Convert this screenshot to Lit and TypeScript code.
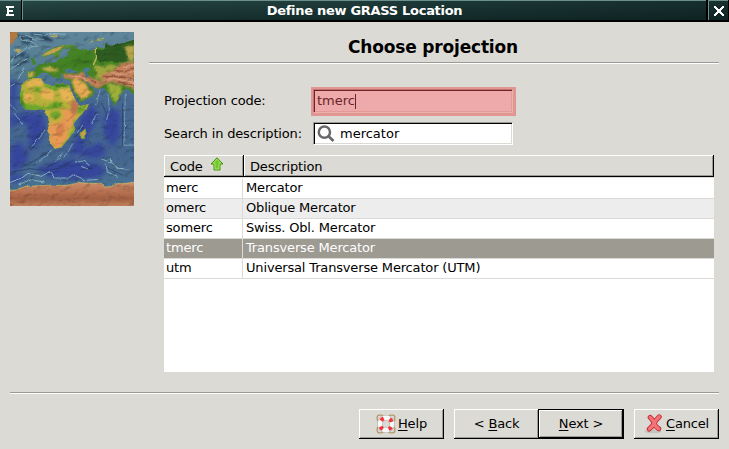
import { LitElement, html, svg, css } from "lit";
import { customElement, property } from "lit/decorators.js";
import { classMap } from "lit/directives/class-map.js";

const land = {
  africa:
    "M36 160L50 143 72 140 95 139 98 150 108 157 118 158 130 164 138 152 150 153 175 158 184 176 198 206 210 222 237 215 229 234 206 256 190 276 196 291 185 308 172 325 155 345 135 352 124 338 118 318 112 295 119 272 108 250 106 238 98 232 70 233 46 232 30 210 30 182Z",
  eurasia:
    "M52 138L52 118 76 117 77 106 90 97 104 92 106 84 116 92 140 91 152 78 176 72 172 62 188 46 214 53 250 56 262 45 284 50 287 32 302 42 330 36 372 23V190L358 178 346 170 337 182 324 197 316 223 305 207 297 184 285 171 262 170 244 164 232 150 226 149 240 164 256 178 241 196 211 208 201 196 183 164 182 146 162 141 160 128 150 123 155 137 147 140 136 128 146 144 128 134 114 124 100 121 92 126 76 136 64 143Z",
  scandinavia: "M94 72L120 52 150 40 184 37 202 46 180 52 160 50 150 60 149 74 137 82 128 70 116 68 104 77Z",
  britain: "M62 97L64 86 60 76 70 74 76 88 79 96 68 99Z",
  madagascar: "M226 291L228 304 219 321 213 318 213 302Z",
  antarctica: "M-9 480L20 473 42 464 100 460 170 460 210 452 240 454 278 454 284 466 320 458 380 449V530H-9Z",
};

@customElement("relief-map")
class ReliefMap extends LitElement {
  static styles = css`
    :host { display: block; width: 124px; height: 174px; }
    svg { display: block; }
  `;
  render() {
    return html`<svg width="124" height="174" viewBox="0 0 372 522">
      <defs>
        <linearGradient id="sea" x1="0" y1="0" x2="0" y2="1">
          <stop offset="0" stop-color="#5b8399" /><stop offset=".2" stop-color="#507a90" />
          <stop offset=".4" stop-color="#41658f" /><stop offset=".7" stop-color="#40628d" />
          <stop offset="1" stop-color="#467590" />
        </linearGradient>
        <linearGradient id="ice" gradientUnits="userSpaceOnUse" x1="0" y1="450" x2="0" y2="522">
          <stop offset="0" stop-color="#cc8c65" /><stop offset=".45" stop-color="#b46b4a" /><stop offset=".7" stop-color="#9f5b3c" /><stop offset="1" stop-color="#c07c58" />
        </linearGradient>
        <filter id="relief" x="0" y="0" width="100%" height="100%" color-interpolation-filters="sRGB">
          <feTurbulence type="fractalNoise" baseFrequency=".035 .045" numOctaves="3" seed="21" result="n" />
          <feDiffuseLighting in="n" surfaceScale="4" diffuseConstant="1.25" lighting-color="#fff" result="l">
            <feDistantLight azimuth="235" elevation="55" />
          </feDiffuseLighting>
          <feComposite in="SourceGraphic" in2="l" operator="arithmetic" k1=".75" k2=".22" />
        </filter>
        <filter id="rough" filterUnits="userSpaceOnUse" x="-12" y="-12" width="396" height="546" color-interpolation-filters="sRGB">
          <feTurbulence type="fractalNoise" baseFrequency=".06" numOctaves="2" seed="3" />
          <feDisplacementMap in="SourceGraphic" scale="9" xChannelSelector="R" yChannelSelector="G" />
        </filter>
        <filter id="haze" filterUnits="userSpaceOnUse" x="-40" y="-40" width="460" height="610"><feGaussianBlur stdDeviation="8" /></filter>
        <filter id="soft" filterUnits="userSpaceOnUse" x="-20" y="-20" width="420" height="570"><feGaussianBlur stdDeviation="2.6" /></filter>
        <clipPath id="eu"><path d=${land.eurasia} /></clipPath>
        <clipPath id="af"><path d=${land.africa} /></clipPath>
      </defs>
      <g filter="url(#relief)">
        <rect width="372" height="522" fill="url(#sea)" />
        <g fill="#2f3e9c" filter="url(#haze)" opacity=".9">
          <path d="M0 140L24 150 15 230 0 245ZM0 250L45 243 98 244 108 290 90 330 58 360 52 280 25 270 0 290ZM0 350L30 325 58 375 28 415 0 420Z" />
          <path d="M212 252L250 215 266 255 244 294 222 340 209 366 174 370 203 310ZM299 226L330 240 330 310 307 349 282 310 280 260Z" />
          <path d="M75 411L130 392 180 381 210 389 270 396 291 416 265 438 186 444 114 435ZM205 356L274 330 289 365 263 380 220 376ZM0 424L55 433 18 455 0 453Z" />
        </g>
        <g filter="url(#soft)" fill="none" stroke="#223e5b" stroke-width="7" stroke-linejoin="round">
          <path d="M8 4L40 18 67 17 54 35 34 26M62 5L96 9 126 26 88 20M4 78L44 63 35 78M15 102L43 90 56 70" />
        </g>
        <g fill="none" stroke="#23396a" stroke-width="3" opacity=".75">
          <path d="M102 290L78 321 58 349M119 356L74 386 41 401M169 366L143 391 105 409M192 383L138 412M275 213L295 258M338 213V342M20 270L55 251M0 421L60 410 107 416 151 408M235 352L206 378M352 281L324 320M210 414L250 408M286 405L337 429" />
        </g>
        <g fill="none" stroke="#86afbd" stroke-width="3" stroke-linejoin="round" filter="url(#rough)">
          <path d="M70 6L102 10 124 4 168 7M27 13L38 28 62 27 83 42 51 46 30 63 12 73 3 94M5 112L34 88 53 80M30 13L51 10 75 21 102 22M36 54L11 57M15 155L0 163M45 109L29 132 22 140" />
          <path d="M0 217L18 235M12 242L37 278M107 291L86 322 64 344M126 353L110 370 76 396M158 362L139 386M188 335L171 365 143 386M294 186L298 231 286 280M346 185L342 340 374 339M270 176L257 219M243 276L257 251 265 247" stroke="#7099af" />
          <path d="M0 451L34 439 54 424 94 433 119 419 134 438 175 438 190 428 229 445 267 442M195 390L222 387 239 401M274 381L306 393 325 409 360 412M288 395L292 420 324 434M303 391L300 378M210 402L234 411M25 456L64 444 104 450M218 280L202 303" />
        </g>
        <g filter="url(#rough)">
          <path d="M-9 -6H24L18 23 8 36 -9 40Z" fill="#ae743e" />
          <path d="M13 55L24 50 36 55 26 61ZM118 9L146 7 143 15 126 16Z" fill="#b9a251" />
          <path d=${land.britain} fill="#407f30" />
          <path d="M237 34Q252 22 282 19" stroke="#a5aa58" stroke-width="4" fill="none" />
          <path d=${land.scandinavia} fill="#588c36" />
          <path d="M95 72L128 51 162 39 148 54 116 68Z" fill="#bea14a" />
          <path d=${land.eurasia} fill="#40801f" />
          <g clip-path="url(#eu)">
            <path d="M258 51L280 55 290 31 375 23 375 76 341 93 306 86 272 94 256 76Z" fill="#28581a" />
            <g filter="url(#soft)">
              <path d="M342 43L374 39V83L354 84 350 64Z" fill="#b8a447" />
              <path d="M255 100L281 105 303 96 326 104 370 82V115L290 139 256 142Z" fill="#9ba439" />
              <path d="M157 126L202 125 216 119 238 134 272 149 277 126 309 119 332 94 375 88V171L336 158 304 150 286 156 262 170 239 155 219 145 162 139Z" fill="#c27e55" />
              <path d="M184 147L201 140 229 157 235 172 246 178 236 193 214 201 202 190Z" fill="#e8aa4d" />
              <path d="M295 154L333 162 335 178 317 213 300 190Z" fill="#9dae35" />
              <path d="M53 119L75 119 69 135 53 137ZM93 109L116 104 149 114 135 119 110 118Z" fill="#c6ae4a" />
              <path d="M119 95L152 100 190 80 213 67 239 70 247 97 215 108 188 100 156 109 125 104Z" fill="#3b7a1d" />
            </g>
            <path d="M259 45L259 78 250 99" stroke="#c5b952" stroke-width="4" fill="none" />
            <path d="M281 143L310 139 372 151M300 125L344 127 375 117M339 106L375 97M176 131L211 134 235 145" stroke="#da997a" stroke-width="4" fill="none" />
            <path d="M277 133L316 134 372 140M314 115L346 119 374 108M327 150L375 160M235 137L260 155" stroke="#92503c" stroke-width="4" fill="none" />
          </g>
          <path d="M166 113Q179 108 184 113L207 119 186 123 166 122ZM218 113L235 104 241 113 233 119 239 132 229 136 222 121Z" fill="#447795" />
          <path d=${land.africa} fill="#b6ae37" />
          <g clip-path="url(#af)" filter="url(#soft)">
            <path d="M49 153L72 143 105 145 95 163 76 159 55 164ZM87 179L114 161 132 183 125 205 95 199ZM140 167L173 159 190 194 184 211 157 204 150 180ZM43 185L65 183 72 201 47 212Z" fill="#e7b150" />
            <path d="M27 179L43 175 36 201 43 214 75 220 108 225 134 209 155 211 155 229 111 234 71 235 40 234 27 207ZM102 140L109 155 138 164 139 151 176 154 179 168 150 170 131 177 102 164ZM77 165L97 167 91 178 73 181ZM193 230L226 218 230 225 207 248Z" fill="#64a522" />
            <path d="M27 195L43 210 45 230 31 226ZM127 152L176 154 172 164 140 166Z" fill="#357f1d" />
            <path d="M153 232L194 235 200 255 188 278 171 299 172 319 142 351 124 336 113 294 121 275 153 267Z" fill="#e8984f" />
            <path d="M108 234L154 228 163 258 142 275 120 269Z" fill="#c7ad3a" />
            <path d="M120 239L147 235 153 252 137 264 120 255Z" fill="#6da42a" />
            <path d="M182 208L199 206 208 223 193 253 181 239Z" fill="#be7149" />
            <path d="M192 262L196 291 179 317 159 344" stroke="#69a425" stroke-width="7" fill="none" />
            <path d="M145 279L163 268 164 299 145 317 137 300Z" fill="#d78048" />
          </g>
          <path d=${land.madagascar} fill="#d19b46" stroke="#61a22c" stroke-width="3" />
          <path d=${land.antarctica} fill="url(#ice)" stroke="#cfc25c" stroke-width="2" />
        </g>
      </g>
    </svg>`;
  }
}

const helpIcon = svg`<svg width="20" height="20" viewBox="0 0 20 20">
  <g fill="none" stroke="#b39868" stroke-width="1.3"><rect x="1.2" y="1.2" width="6" height="6" rx="2"/><rect x="12.8" y="1.2" width="6" height="6" rx="2"/><rect x="1.2" y="12.8" width="6" height="6" rx="2"/><rect x="12.8" y="12.8" width="6" height="6" rx="2"/></g>
  <circle cx="10" cy="10" r="6.1" fill="none" stroke="#a9a9a6" stroke-width="5.8"/>
  <circle cx="10" cy="10" r="6.1" fill="none" stroke="#f8f8f7" stroke-width="4.6"/>
  <circle cx="10" cy="10" r="6" fill="none" stroke="#f0343a" stroke-width="4" stroke-dasharray="3.2 6.225" stroke-dashoffset="-3.11"/>
</svg>`;

const cancelIcon = svg`<svg width="20" height="20" viewBox="0 0 20 20">
  <ellipse cx="9" cy="17.3" rx="8.5" ry="2" fill="#aaa9a5" opacity=".45"/>
  <path d="M6.2 3.4Q8.6 5.5 10.2 9.4 11.6 13 14.8 14.8M15.2 2.8Q11.6 6 10.2 9.4 8 13 5.2 15" fill="none" stroke="#c72c33" stroke-width="5" stroke-linecap="round"/>
  <path d="M6.2 3.4Q8.6 5.5 10.2 9.4 11.6 13 14.8 14.8M15.2 2.8Q11.6 6 10.2 9.4 8 13 5.2 15" fill="none" stroke="#f27478" stroke-width="3.2" stroke-linecap="round"/>
</svg>`;

const searchIcon = svg`<svg width="18" height="18" viewBox="0 0 18 18">
  <circle cx="7.4" cy="7.2" r="5.6" fill="none" stroke="#686868" stroke-width="2.5"/>
  <path d="M11.3 11.1L16.5 16" stroke="#686868" stroke-width="2.7"/>
</svg>`;

const sortIcon = svg`<svg width="14" height="14" viewBox="0 0 14 14">
  <path d="M7 .8L13 7H10V13H4V7H1Z" fill="#73c928" stroke="#459310" stroke-linejoin="round"/>
  <path d="M7 2.3L10.8 6H9V12H5V6H3.2Z" fill="none" stroke="#b2e77f" stroke-width=".8"/>
</svg>`;

@customElement("wizard-button")
class WizardButton extends LitElement {
  @property() label = "";
  @property() lead = "";
  @property({ attribute: false }) icon: unknown = null;
  @property({ type: Boolean }) primary = false;
  static styles = css`
    :host { display: block; }
    button {
      box-sizing: border-box; width: 85px; height: 30px; margin: 0; padding: 0;
      display: flex; align-items: center; justify-content: center; gap: 2px;
      font: inherit; letter-spacing: inherit; color: #000; background: #dcdad5; border: 0; border-radius: 0; white-space: pre;
      box-shadow: inset -1px -1px #000, inset 1px 1px #fff, inset -2px -2px #9c9a94;
    }
    .primary { border: 1px solid #000; width: 86px; }
    svg { display: block; }
    u { text-underline-offset: 2px; text-decoration-thickness: 1px; text-decoration-skip-ink: none; }
  `;
  render() {
    return html`<button class=${classMap({ primary: this.primary })}>${this.icon}<span>${this.lead}<u>${this.label[0]}</u>${this.label.slice(1)}</span></button>`;
  }
}

const rows = [
  ["merc", "Mercator"],
  ["omerc", "Oblique Mercator"],
  ["somerc", "Swiss. Obl. Mercator"],
  ["tmerc", "Transverse Mercator"],
  ["utm", "Universal Transverse Mercator (UTM)"],
];

@customElement("app-root")
class AppRoot extends LitElement {
  static styles = css`
    :host {
      display: flex; flex-direction: column; box-sizing: border-box; width: 729px; height: 449px; overflow: hidden;
      background: #dcdad5; color: #000; font: 13px/20px "DejaVu Sans", sans-serif; letter-spacing: -0.16px;
    }
    .titlebar { display: grid; grid-template-columns: 22px 1fr 21px; height: 22px; background: #000; flex: none; }
    .seg {
      box-sizing: border-box; height: 20px; border-top: 1px solid #6a8f8c; border-left: 1px solid #6a8f8c;
      background: linear-gradient(#264644, #1b3534); color: #fff; display: flex; align-items: center; justify-content: center;
    }
    .menu { margin-right: 1px; padding: 1px 1px 0 0; border-left: 0; }
    .title {
      margin-right: 2px; font-weight: bold; letter-spacing: -0.29px;
      background: linear-gradient(90deg, transparent, rgba(0, 16, 16, .42)), linear-gradient(#264644, #183130);
    }
    .close { margin-right: 1px; padding: 1px 0 0 1px; background: linear-gradient(#183230, #0e2423); }
    .seg svg { display: block; }
    .body { display: flex; flex: none; height: 370px; }
    relief-map { margin: 10px 15px 0 10px; flex: none; }
    .page { width: 570px; }
    h1 { margin: 14px 2px 0 0; height: 26px; font-size: 17px; line-height: 22px; text-align: center; letter-spacing: -0.18px; }
    hr { margin: 0; border: 0; height: 1px; background: #9c9a94; border-bottom: 1px solid #fff; }
    .form { margin: 23px 0 0 15px; display: grid; grid-template-columns: 147px auto; grid-template-rows: 32px 36px; justify-content: start; }
    .form > label { line-height: 27px; }
    .form > label.second { line-height: 30px; }
    .mark { box-sizing: border-box; width: 205px; height: 29px; padding: 2px; background: #e09692; }
    .field {
      box-sizing: border-box; height: 23px; width: 200px; display: flex; align-items: center; padding: 0 3px;
      background: #fff; border: 1px solid; border-color: #9c9a94 #fff #fff #9c9a94;
      box-shadow: inset 1px 1px #000, inset -1px -1px #dcdad5; letter-spacing: 0;
    }
    .mark .field {
      height: 24px; background: #eea9aa; color: #6b2529; border-color: #c8706e #f0b0ac #f0b0ac #c8706e;
      box-shadow: inset 1px 1px #6b2529, inset -1px -1px #e29b99;
    }
    .caret { width: 1px; height: 15px; background: #6b2529; }
    .search { margin: 3px 0 0 2px; gap: 5px; }
    .table { margin-left: 15px; width: 550px; height: 217px; background: #fff; }
    .row { display: grid; grid-template-columns: 79px 1fr; height: 20px; line-height: 18px; }
    .row > span { border-bottom: 1px solid #dcdad5; padding-left: 3px; white-space: pre; height: 19px; }
    .row > span:first-child { border-right: 1px solid #dcdad5; padding-left: 2px; }
    .alt { background: #ededed; }
    .sel { background: #9c9a91; color: #fff; }
    .head { display: grid; grid-template-columns: 80px 1fr; height: 23px; margin-bottom: 1px; background: #dcdad5; }
    .head > span {
      display: flex; gap: 7px; height: 22px; line-height: 23px; padding-left: 6px;
      box-shadow: inset -1px -1px #000, inset 1px 1px #fff, inset -2px -2px #9c9a94;
    }
    .head svg { margin-top: 2px; }
    .bottom { margin: 0 10px; }
    .actions { display: flex; justify-content: flex-end; margin: 15px 10px 0 0; }
    .gap { margin-left: 10px; }
    .tight { margin-left: -1px; }
  `;
  render() {
    return html`
      <div class="titlebar">
        <div class="seg menu"><svg width="8" height="10" viewBox="0 0 8 10" shape-rendering="crispEdges"><path d="M0 0H8V2H3V4H7V6H3V8H8V10H0V8H1V2H0Z" fill="#fff" /></svg></div>
        <div class="seg title">Define new GRASS Location</div>
        <div class="seg close"><svg width="10" height="10" viewBox="0 0 10 10" shape-rendering="crispEdges"><path d="M0 0H2V1H3V2H4V3H6V2H7V1H8V0H10V2H9V3H8V4H7V6H8V7H9V8H10V10H8V9H7V8H6V7H4V8H3V9H2V10H0V8H1V7H2V6H3V4H2V3H1V2H0Z" fill="#fff" /></svg></div>
      </div>
      <div class="body">
        <relief-map></relief-map>
        <div class="page">
          <h1>Choose projection</h1>
          <hr />
          <div class="form">
            <label>Projection code:</label>
            <div class="mark"><div class="field">tmerc<i class="caret"></i></div></div>
            <label class="second">Search in description:</label>
            <div class="field search">${searchIcon}<span>mercator</span></div>
          </div>
          <div class="table">
            <div class="head"><span>Code ${sortIcon}</span><span>Description</span></div>
            ${rows.map(
              ([code, text], i) => html`<div class=${classMap({ row: true, alt: i === 1, sel: i === 3 })}><span>${code}</span><span>${text}</span></div>`,
            )}
          </div>
        </div>
      </div>
      <hr class="bottom" />
      <div class="actions">
        <wizard-button label="Help" .icon=${helpIcon}></wizard-button>
        <wizard-button class="gap" lead="< " label="Back"></wizard-button>
        <wizard-button class="tight" label="Next >" primary></wizard-button>
        <wizard-button class="gap" label="Cancel" .icon=${cancelIcon}></wizard-button>
      </div>
    `;
  }
}
